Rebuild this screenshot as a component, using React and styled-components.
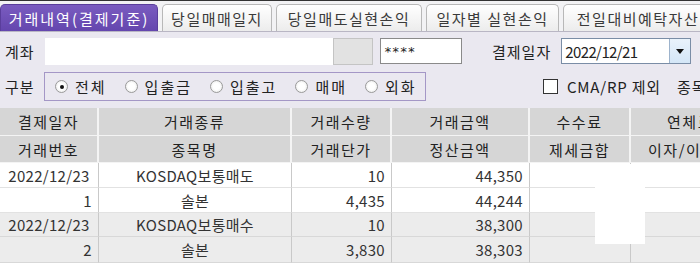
import React from 'react';
import styled, { createGlobalStyle } from 'styled-components';

const GlobalStyle = createGlobalStyle`
  html, body { margin: 0; padding: 0; background: #ffffff; }
  body { font-family: "Noto Sans CJK KR", "Noto Sans", sans-serif; color: #222; }
`;

const Screen = styled.div`
  width: 700px;
  height: 274px;
  overflow: hidden;
  background: #eae8f0;
  display: flex;
  flex-direction: column;
  border-top: 1px solid #333;
  box-sizing: border-box;
`;

const TabBar = styled.div`
  flex: none;
  height: 30px;
  display: flex;
  align-items: flex-end;
  gap: 4px;
  background: #f2f2f4;
  border-bottom: 1px solid #b9b6c4;
  white-space: nowrap;
`;

const Tab = styled.div`
  flex: none;
  width: ${p => p.w}px;
  height: 27px;
  box-sizing: border-box;
  display: flex;
  align-items: center;
  justify-content: center;
  font-size: 15px;
  letter-spacing: ${p => (p.active ? 2 : 1.5)}px;
  border-radius: 5px 5px 0 0;
  border: 1px solid ${p => (p.active ? '#5a3e9c' : '#b8b8b8')};
  border-bottom: none;
  background: ${p => (p.active ? 'linear-gradient(#7a5cc0, #6446ae)' : 'linear-gradient(#ffffff, #ececec)')};
  color: ${p => (p.active ? '#ffffff' : '#3a3a3a')};
`;

const Form = styled.div`
  flex: none;
  display: flex;
  flex-direction: column;
  gap: 7px;
  padding-top: 5px;
  height: 69px;
  box-sizing: border-box;
`;

const FormRow = styled.div`
  display: flex;
  align-items: center;
  height: ${p => p.h || 28}px;
`;

const Label = styled.span`
  font-size: 15px;
  width: ${p => p.w || 'auto'};
  padding-left: ${p => p.pl || 0}px;
  margin-left: ${p => p.ml || 0}px;
  letter-spacing: ${p => p.ls ?? 1}px;
  flex: none;
`;

const Field = styled.div`
  flex: none;
  box-sizing: border-box;
  width: ${p => p.w}px;
  height: ${p => p.h || 27}px;
  margin-left: ${p => p.ml || 0}px;
  background: ${p => p.bg || '#ffffff'};
  border: 1px solid ${p => p.border || 'transparent'};
  font-family: "DejaVu Sans Mono", monospace;
  font-size: 13px;
  display: flex;
  align-items: center;
  padding-left: 3px;
`;

const DateBox = styled.div`
  flex: none;
  display: flex;
  margin-left: 10px;
  height: 26px;
  border: 1px solid #7a8da6;
  box-sizing: border-box;
`;

const DateText = styled.div`
  width: 104px;
  background: #fff;
  font-size: 15px;
  display: flex;
  align-items: center;
  padding-left: 3px;
  letter-spacing: -0.6px;
`;

const DropBtn = styled.div`
  width: 20px;
  background: linear-gradient(#e9f2fb, #d4e6f7);
  border-left: 1px solid #9db3cc;
  display: flex;
  align-items: center;
  justify-content: center;
  &::after {
    content: '';
    border-left: 4px solid transparent;
    border-right: 4px solid transparent;
    border-top: 5px solid #111;
  }
`;

const RadioGroup = styled.div`
  flex: none;
  box-sizing: border-box;
  width: 382px;
  height: 29px;
  margin-left: 4px;
  border: 1px solid #a497c6;
  display: flex;
  align-items: center;
  padding-left: 10px;
  gap: 18px;
`;

const RadioItem = styled.label`
  display: flex;
  align-items: center;
  gap: 7px;
  font-size: 15px;
  letter-spacing: 2px;
`;

const RadioDot = styled.span`
  width: 13px;
  height: 13px;
  border-radius: 50%;
  box-sizing: border-box;
  border: 1px solid #9a9a9a;
  background: radial-gradient(circle, #ffffff 40%, #e4e4e4 100%);
  position: relative;
  &::after {
    content: '';
    display: ${p => (p.on ? 'block' : 'none')};
    position: absolute;
    left: 3.5px;
    top: 3.5px;
    width: 4px;
    height: 4px;
    border-radius: 50%;
    background: #111;
  }
`;

const Check = styled.span`
  flex: none;
  width: 15px;
  height: 15px;
  box-sizing: border-box;
  border: 1px solid #333;
  background: #fff;
  margin-left: 117px;
  margin-right: 9px;
`;

const TableWrap = styled.div`
  position: relative;
  overflow: hidden;
  flex: 1;
  margin-top: 7px;
  background: #fff;
`;

const Table = styled.div`
  display: grid;
  grid-template-columns: 99px 193px 100px 138px 101px 120px;
  width: 751px;
  background: #ffffff;
`;

const Head = styled.div`
  height: ${p => p.h}px;
  background: #d6d6d6;
  border-right: 2px solid #f4f4f4;
  border-bottom: 1px solid #f4f4f4;
  display: flex;
  align-items: center;
  justify-content: center;
  font-size: 15px;
  letter-spacing: 1.5px;
  color: #222;
  box-sizing: border-box;
`;

const Cell = styled.div`
  height: ${p => p.h}px;
  background: ${p => (p.alt ? '#ececec' : '#ffffff')};
  border-right: 1px solid #c9c9c9;
  border-bottom: 1px solid ${p => (p.alt ? '#d8d8d8' : '#e2e2e2')};
  box-sizing: border-box;
  display: flex;
  align-items: center;
  justify-content: ${p => (p.align === 'right' ? 'flex-end' : 'center')};
  padding: 0 6px;
  font-size: 15px;
  color: #333;
  letter-spacing: 0.3px;
  white-space: nowrap;
`;

const Mask = styled.div`
  position: absolute;
  left: 595px;
  top: 56px;
  width: 50px;
  height: 80px;
  background: #ffffff;
`;

const tabs = [
  { t: '거래내역(결제기준)', w: 158, active: true },
  { t: '당일매매일지', w: 110 },
  { t: '당일매도실현손익', w: 146 },
  { t: '일자별 실현손익', w: 133 },
  { t: '전일대비예탁자산', w: 150 },
];

const radios = ['전체', '입출금', '입출고', '매매', '외화'];

const heads = [
  { h: 28, c: ['결제일자', '거래종류', '거래수량', '거래금액', '수수료', '연체료'] },
  { h: 27, c: ['거래번호', '종목명', '거래단가', '정산금액', '제세금합', '이자/이용료'] },
];

const rows = [
  { alt: false, h: 25, c: ['2022/12/23', 'KOSDAQ보통매도', '10', '44,350', '', ''] },
  { alt: false, h: 25, c: ['1', '솔본', '4,435', '44,244', '', ''] },
  { alt: true, h: 24, c: ['2022/12/23', 'KOSDAQ보통매수', '10', '38,300', '', ''] },
  { alt: true, h: 26, c: ['2', '솔본', '3,830', '38,303', '', ''] },
];

const aligns = ['right', 'center', 'right', 'right', 'right', 'right'];

export default function App() {
  return (
    <>
      <GlobalStyle />
      <Screen>
        <TabBar>
          {tabs.map(tab => (
            <Tab key={tab.t} w={tab.w} active={tab.active}>{tab.t}</Tab>
          ))}
        </TabBar>
        <Form>
          <FormRow>
            <Label pl={5} w="40px">계좌</Label>
            <Field w={288} />
            <Field w={40} bg="#e2e2e2" border="#c4c4c4" />
            <Field w={82} ml={7} border="#8a8a8a" h={26}>****</Field>
            <Label ml={30}>결제일자</Label>
            <DateBox>
              <DateText>2022/12/21</DateText>
              <DropBtn />
            </DateBox>
          </FormRow>
          <FormRow h={29}>
            <Label pl={5} w="35px">구분</Label>
            <RadioGroup>
              {radios.map((r, i) => (
                <RadioItem key={r}>
                  <RadioDot on={i === 0} />
                  {r}
                </RadioItem>
              ))}
            </RadioGroup>
            <Check />
            <Label ls={0.8}>CMA/RP 제외</Label>
            <Label ml={16}>종목</Label>
          </FormRow>
        </Form>
        <TableWrap>
          <Table>
            {heads.map((hr, ri) =>
              hr.c.map(h => <Head key={ri + h} h={hr.h}>{h}</Head>)
            )}
            {rows.map((r, ri) =>
              r.c.map((v, ci) => (
                <Cell
                  key={ri + '-' + ci}
                  h={r.h}
                  alt={r.alt}
                  align={ci === 0 && v.includes('/') ? 'center' : aligns[ci]}
                >
                  {v}
                </Cell>
              ))
            )}
          </Table>
          <Mask />
        </TableWrap>
      </Screen>
    </>
  );
}
